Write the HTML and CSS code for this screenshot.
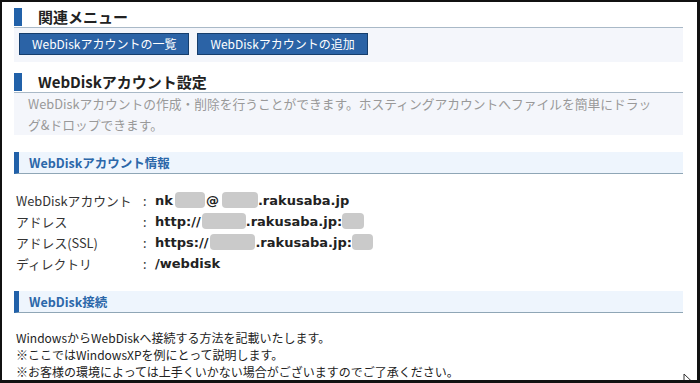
FILE: index.html
```html
<!DOCTYPE html>
<html lang="ja">
<head>
    <meta charset="UTF-8">
    <meta name="viewport" content="width=device-width, initial-scale=1.0">
    <title>WebDiskアカウント設定</title>
    <link rel="stylesheet" href="styles.css">
</head>
<body>
    <div class="frame">
        <div class="page">
            <h2 class="title"><span class="bar"></span>関連メニュー</h2>
            <div class="menu">
                <button class="menu-btn">WebDiskアカウントの一覧</button>
                <button class="menu-btn">WebDiskアカウントの追加</button>
            </div>

            <h2 class="title title-second"><span class="bar"></span>WebDiskアカウント設定</h2>
            <p class="lead">WebDiskアカウントの作成・削除を行うことができます。ホスティングアカウントへファイルを簡単にドラッ<br>グ&amp;ドロップできます。</p>

            <h3 class="sub">WebDiskアカウント情報</h3>
            <div class="info">
                <div class="info-label">WebDiskアカウント</div>
                <div class="info-sep">:</div>
                <div class="info-value">nk<span class="mask mask-a"></span>@<span class="mask mask-b"></span>.rakusaba.jp</div>

                <div class="info-label">アドレス</div>
                <div class="info-sep">:</div>
                <div class="info-value">http://<span class="mask mask-c"></span>.rakusaba.jp:<span class="mask mask-d"></span></div>

                <div class="info-label">アドレス(SSL)</div>
                <div class="info-sep">:</div>
                <div class="info-value">https://<span class="mask mask-e"></span>.rakusaba.jp:<span class="mask mask-f"></span></div>

                <div class="info-label">ディレクトリ</div>
                <div class="info-sep">:</div>
                <div class="info-value">/webdisk</div>
            </div>

            <h3 class="sub sub-second">WebDisk接続</h3>
            <div class="note">
                <p>WindowsからWebDiskへ接続する方法を記載いたします。</p>
                <p>※ここではWindowsXPを例にとって説明します。</p>
                <p>※お客様の環境によっては上手くいかない場合がございますのでご了承ください。</p>
            </div>
        </div>

        <svg class="cursor" width="10" height="14" viewBox="0 0 10 14">
            <path d="M1 1 L1 12 L4 9 L6 13 L7.5 12.3 L5.6 8.6 L9 8.6 Z" fill="#fff" stroke="#333" stroke-width="1"/>
        </svg>
    </div>
</body>
</html>
```

FILE: styles.css
```css
body {
    margin: 0;
    padding: 0;
    background-color: #fff;
    font-family: "Noto Sans CJK JP", sans-serif;
    color: #333;
}

.frame {
    position: relative;
    width: 700px;
    height: 383px;
    box-sizing: border-box;
    border-style: solid;
    border-color: #111;
    border-width: 2px 3px 3px 2px;
    overflow: hidden;
    background-color: #fff;
}

.page {
    padding: 6px 14px 0 12px;
}

/* section titles */
.title {
    display: flex;
    align-items: center;
    margin: 0;
    height: 18px;
    padding-bottom: 1px;
    border-bottom: 1px solid #a9b9c7;
    font-size: 15px;
    font-weight: bold;
    line-height: 18px;
    color: #222;
}

.title-second {
    margin-top: 11px;
}

.bar {
    width: 8px;
    height: 18px;
    margin-right: 16px;
    background-color: #2161a9;
}

/* related menu */
.menu {
    display: flex;
    gap: 8px;
    padding: 5px 5px 7px;
    background-color: #f4f6fb;
}

.menu-btn {
    height: 22px;
    padding: 0 12px;
    border: 1px solid #163e6c;
    background-color: #2b63a6;
    color: #fff;
    font-family: "Noto Sans CJK JP", sans-serif;
    font-size: 12px;
    line-height: 20px;
}

.lead {
    margin: 0;
    padding: 0 0 0 14px;
    background-color: #f4f6fb;
    font-size: 12.75px;
    line-height: 21px;
    color: #999;
}

/* sub headings */
.sub {
    margin: 17px 0 0;
    height: 21px;
    padding-left: 10px;
    border-left: 5px solid #2161a9;
    border-bottom: 1px solid #8fa6b6;
    background-color: #eef5fd;
    font-size: 12.5px;
    font-weight: bold;
    line-height: 21px;
    color: #2b67a9;
}

.sub-second {
    margin-top: 17px;
}

/* account info */
.info {
    display: grid;
    grid-template-columns: 127px 12px auto;
    margin: 16px 0 0 2px;
    font-size: 12.8px;
    line-height: 21px;
}

.info-value {
    font-family: "DejaVu Sans", "Noto Sans CJK JP", sans-serif;
    font-size: 13px;
    font-weight: bold;
    color: #222;
}

.mask {
    display: inline-block;
    height: 16px;
    vertical-align: -3px;
    border-radius: 4px;
    background-color: #cacaca;
}

.mask-a { width: 30px; margin: 0 1px 0 2px; }
.mask-b { width: 36px; margin-left: 3px; }
.mask-c { width: 44px; margin-left: 1px; }
.mask-d { width: 22px; }
.mask-e { width: 45px; margin-left: 2px; }
.mask-f { width: 21px; }

.note {
    margin: 16px 0 0 2px;
    font-size: 12px;
    line-height: 17px;
    color: #222;
}

.note p {
    margin: 0;
}

.cursor {
    position: absolute;
    left: 681px;
    top: 371px;
}
```
